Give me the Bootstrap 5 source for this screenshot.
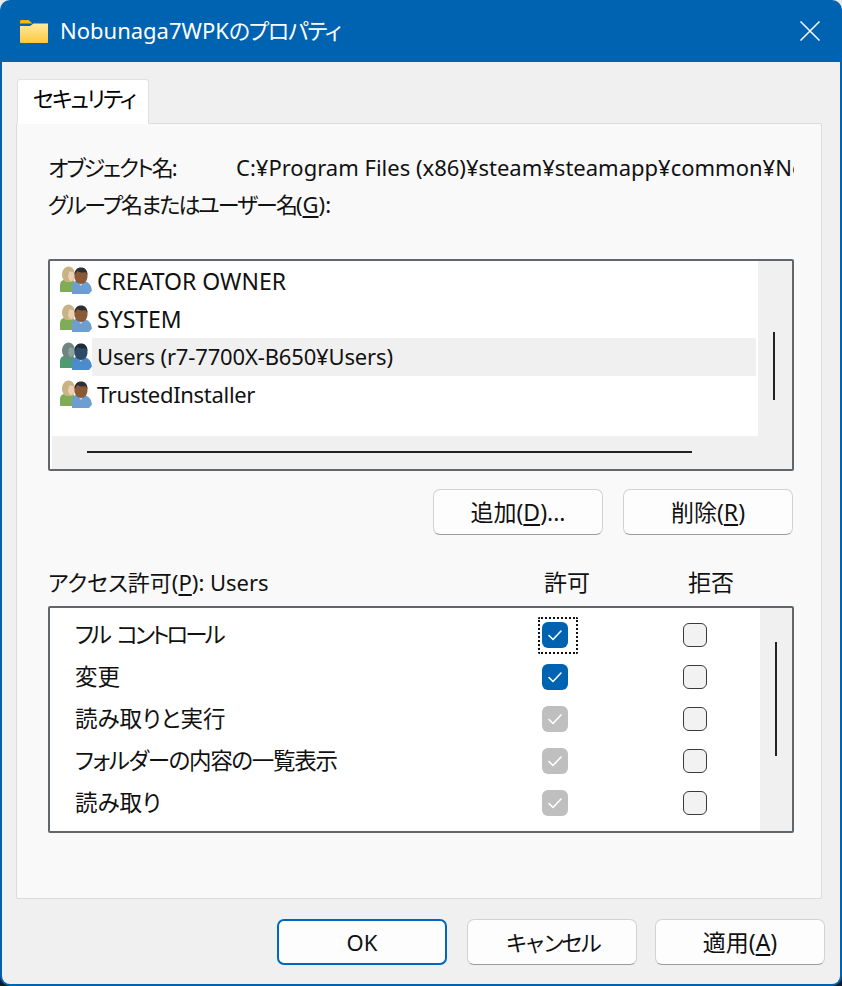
<!DOCTYPE html>
<html lang="ja">
<head>
    <meta charset="UTF-8">
    <meta name="viewport" content="width=device-width, initial-scale=1.0">
    <title>Nobunaga7WPKのプロパティ</title>
    <link href="https://cdn.jsdelivr.net/npm/bootstrap@5.3.0/dist/css/bootstrap.min.css" rel="stylesheet">
    <style>
        html, body { height: 100%; }
        body {
            background: linear-gradient(#e9e9e9 50%, #0b1c33 50%);
            font-family: "Noto Sans", "Noto Sans CJK JP", sans-serif;
            font-size: 22px;
            color: #111;
            overflow: hidden;
            font-feature-settings: "palt";
        }
        .win-frame { height: 986px; background: #0063b1; border-radius: 10px; overflow: hidden; padding: 0 2px 2px; }
        .title-bar { height: 62px; color: #fff; padding-left: 18px; padding-right: 20px; }
        .title-text { margin-left: 12px; line-height: 1; padding-bottom: 2px; }
        .win-client { height: 922px; background: #f0f0f0; padding: 17px 18px 0 14px; border-radius: 0 0 8px 8px; }
        .prop-tabs { border: 0; padding-left: 1px; }
        .prop-tabs .nav-link { height: 45px; width: 132px; padding: 0 0 0 15px; margin-bottom: -1px; font-size: 22px; line-height: 37px; color: #111;
            background: #f9f9f9; border: 1px solid #dcdcdc; border-bottom-color: #f9f9f9; border-radius: 3px 3px 0 0; position: relative; }
        .prop-panel { height: 776px; background: #f9f9f9; border: 1px solid #dcdcdc; border-radius: 0 2px 2px 2px; padding: 26px 27px 0 31px; }
        .label-row { height: 37px; line-height: 35px; white-space: nowrap; }
        .label-name { width: 188px; flex: none; }
        .sunken-box { border: 2px solid #60666a; border-radius: 2px; background: #fff; }
        .list-box { height: 212px; margin-top: 35px; }
        .list-rows { height: 175px; padding-top: 1px; }
        .list-row { height: 38px; line-height: 36px; }
        .acct-icon { width: 32px; height: 28px; margin-left: 10px; margin-bottom: 3px; flex: none; }
        .acct-name { padding-left: 5px; margin-right: 2px; height: 38px; }
        .acct-caps { font-size: 23px; line-height: 38px; }
        .acct-lower { letter-spacing: -.3px; }
        .acct-users { letter-spacing: -.15px; }
        .row-selected { background: #f0f0f0; }
        .scroll-v { width: 34px; background: #f0f0f0; flex: none; }
        .list-thumb-v { width: 2px; height: 68px; background: #222; margin: 71px 0 0 15px; }
        .scroll-h { height: 33px; background: #f0f0f0; padding: 15px 0 0 37px; margin-left: 2px; }
        .thumb-h { width: 605px; height: 2px; background: #222; margin-left: -2px; }
        .win-btn { width: 170px; height: 46px; padding: 0; font-size: 23px; line-height: 38px; color: #111; background: #fdfdfd;
            border: 1px solid #d2d2d2; border-bottom-color: #9c9c9c; border-radius: 7px; }
        .win-btn-default { border: 2px solid #0067c0; line-height: 36px; font-size: 22px; }
        .win-btn-kana { font-size: 22px; letter-spacing: -3.4px; }
        .btn-pair { margin-top: 18px; margin-right: 1px; gap: 20px; }
        .perm-head { display: grid; grid-template-columns: 496px 44px 100px 46px; height: 36px; line-height: 34px; margin-top: 30px; margin-bottom: 5px; white-space: nowrap; }
        .perm-head-kanji { font-size: 23px; }
        .perm-box { height: 227px; }
        .perm-rows { padding-top: 6px; font-size: 22.5px; }
        .perm-row { display: grid; grid-template-columns: 460px 40px 100px 40px; height: 42px; line-height: 40px; align-items: center; padding-left: 25px; }
        .perm-scroll { width: 32px; background: #f0f0f0; flex: none; }
        .perm-thumb { width: 2px; height: 114px; background: #222; margin: 34px 0 0 15px; }
        .chk { width: 26px; height: 26px; border-radius: 6px; margin-left: 7px; position: relative; }
        .chk svg { display: block; }
        .chk-on { background: #0063b1; }
        .chk-dim { background: #bfbfbf; }
        .chk-off { width: 24px; height: 24px; margin-left: 8px; background: #f2f2f2; border: 1.5px solid #3a3a3a; border-radius: 6px; }
        .focus-dots { position: absolute; left: -4px; top: -5px; width: 40px; height: 37px; border: 2px dotted #111; border-radius: 2px; }
        .foot-row { margin-top: 20px; margin-right: -3px; }
        .foot-row .win-btn { margin-left: 20px; }
        .foot-row .win-btn:last-child { margin-left: 18px; }
        .tight-1 { letter-spacing: -1.3px; }
        .tight-2 { letter-spacing: -2px; }
        .tight-3 { letter-spacing: -3px; word-spacing: 5px; }
        u { text-underline-offset: 3px; text-decoration-thickness: 1.5px; }
    </style>
</head>
<body>
    <svg width="0" height="0" class="position-absolute">
        <symbol id="acct" viewBox="0 0 32 28">
            <path d="M0 25v-6c0-3 2-5 5-5.500h5c3 .5 5 2 5 5v7.500H1c-.6 0-1-.4-1-1z" fill="#7fad57"/>
            <path d="M2 9c0-5 3-8.500 6.500-8.500S15 4 15 9c0 3-1 6-3 7H6c-2-1-4-4-4-7z" fill="#c9b283"/>
            <path d="M9 6c2-1 5 0 6 2 0 4-2 7-4 7-1.500 0-2.500-2-3-4z" fill="#ecd0b4"/>
            <path d="M12 28v-8c0-3 2-4.500 5-5.500h6c4 1 7 3 8 6l1 4-3 3.500z" fill="#6d9ed2"/>
            <path d="M17 15l4 5 3-5z" fill="#c9dcef"/>
            <path d="M14.500 10c0-5 2.500-8 6.500-8s6.500 3 6.500 8-3 8-6.500 8-6.500-3-6.500-8z" fill="#8a5a36"/>
            <path d="M14.500 9c0-5 2.500-7.500 6.500-7.500S27.500 4 27.500 9l-2-3c-3 1-6 .5-8-1z" fill="#2e2e33"/>
        </symbol>
        <symbol id="acct-sel" viewBox="0 0 32 28">
            <path d="M0 25v-6c0-3 2-5 5-5.500h5c3 .5 5 2 5 5v7.500H1c-.6 0-1-.4-1-1z" fill="#4f9a72"/>
            <path d="M2 9c0-5 3-8.500 6.500-8.500S15 4 15 9c0 3-1 6-3 7H6c-2-1-4-4-4-7z" fill="#6f8582"/>
            <path d="M9 6c2-1 5 0 6 2 0 4-2 7-4 7-1.500 0-2.500-2-3-4z" fill="#8da09c"/>
            <path d="M12 28v-8c0-3 2-4.500 5-5.500h6c4 1 7 3 8 6l1 4-3 3.500z" fill="#4c8ccc"/>
            <path d="M17 15l4 5 3-5z" fill="#a4c4e4"/>
            <path d="M14.500 10c0-5 2.500-8 6.500-8s6.500 3 6.500 8-3 8-6.500 8-6.500-3-6.500-8z" fill="#2f4a66"/>
            <path d="M14.500 9c0-5 2.500-7.500 6.500-7.500S27.500 4 27.500 9l-2-3c-3 1-6 .5-8-1z" fill="#1d2b3c"/>
        </symbol>
        <symbol id="tick" viewBox="0 0 26 26">
            <path d="M7 13.500l4 4 8-8.500" fill="none" stroke="#fff" stroke-width="1.600" stroke-linecap="round" stroke-linejoin="round"/>
        </symbol>
    </svg>

    <div class="win-frame">
        <div class="title-bar d-flex align-items-center">
            <svg width="28" height="23" viewBox="0 0 28 23">
                <defs><linearGradient id="fold" x1="0" y1="0" x2="0" y2="1"><stop offset="0" stop-color="#ffeaa0"/><stop offset="1" stop-color="#fcc83e"/></linearGradient></defs>
                <path d="M0 1.500C0 .6.6 0 1.500 0h7l4 3.500H0z" fill="#fdb414"/>
                <path d="M0 6h10l3.500-2.500H28V22c0 .6-.5 1-1 1H1c-.5 0-1-.4-1-1z" fill="url(#fold)"/>
            </svg>
            <span class="title-text flex-grow-1">Nobunaga7WPK<span class="tight-1">のプロパティ</span></span>
            <svg width="20" height="20" viewBox="0 0 20 20"><path d="M.5.5l19 19M19.500.5l-19 19" stroke="#fff" stroke-width="1.500"/></svg>
        </div>

        <div class="win-client">
            <ul class="nav nav-tabs prop-tabs">
                <li class="nav-item"><a class="nav-link active tight-2" href="#">セキュリティ</a></li>
            </ul>
            <div class="prop-panel">
                <div class="label-row d-flex">
                    <span class="label-name"><span class="tight-2">オブジェクト名</span>:</span>
                    <span class="overflow-hidden">C:¥Program Files (x86)¥steam¥steamapp¥common¥Nobunaga7WPK</span>
                </div>
                <div class="label-row"><span class="tight-2">グループ名またはユーザー名</span>(<u>G</u>):</div>

                <div class="sunken-box list-box">
                    <div class="d-flex">
                        <div class="list-rows flex-grow-1">
                            <div class="list-row d-flex align-items-center"><svg class="acct-icon"><use href="#acct"/></svg><span class="acct-name acct-caps flex-grow-1">CREATOR OWNER</span></div>
                            <div class="list-row d-flex align-items-center"><svg class="acct-icon"><use href="#acct"/></svg><span class="acct-name acct-caps flex-grow-1">SYSTEM</span></div>
                            <div class="list-row d-flex align-items-center"><svg class="acct-icon"><use href="#acct-sel"/></svg><span class="acct-name acct-users row-selected flex-grow-1">Users (r7-7700X-B650¥Users)</span></div>
                            <div class="list-row d-flex align-items-center"><svg class="acct-icon"><use href="#acct"/></svg><span class="acct-name acct-lower flex-grow-1">TrustedInstaller</span></div>
                        </div>
                        <div class="scroll-v"><div class="list-thumb-v"></div></div>
                    </div>
                    <div class="scroll-h"><div class="thumb-h"></div></div>
                </div>

                <div class="d-flex justify-content-end btn-pair">
                    <button type="button" class="btn win-btn">追加(<u>D</u>)...</button>
                    <button type="button" class="btn win-btn">削除(<u>R</u>)</button>
                </div>

                <div class="perm-head">
                    <span>アクセス許可(<u>P</u>): Users</span>
                    <span class="perm-head-kanji">許可</span>
                    <span></span>
                    <span class="perm-head-kanji">拒否</span>
                </div>
                <div class="sunken-box perm-box d-flex">
                    <div class="perm-rows flex-grow-1" id="permRows"></div>
                    <div class="perm-scroll"><div class="perm-thumb"></div></div>
                </div>
            </div>
            <div class="d-flex justify-content-end foot-row">
                <button type="button" class="btn win-btn win-btn-default">OK</button>
                <button type="button" class="btn win-btn win-btn-kana">キャンセル</button>
                <button type="button" class="btn win-btn">適用(<u>A</u>)</button>
            </div>
        </div>
    </div>

    <script>
        const perms = [
            { name: "フル コントロール", state: "on", focus: true, cls: "tight-3" },
            { name: "変更", state: "on" },
            { name: "読み取りと実行", state: "dim" },
            { name: "フォルダーの内容の一覧表示", state: "dim", cls: "tight-1" },
            { name: "読み取り", state: "dim" }
        ];
        document.getElementById("permRows").innerHTML = perms.map(p => `
            <div class="perm-row">
                <span class="${p.cls || ''}">${p.name}</span>
                <span class="chk chk-${p.state}"><svg width="26" height="26"><use href="#tick"/></svg>${p.focus ? '<span class="focus-dots"></span>' : ''}</span>
                <span></span>
                <span class="chk-off"></span>
            </div>`).join("");
    </script>
    <script src="https://cdn.jsdelivr.net/npm/bootstrap@5.3.0/dist/js/bootstrap.bundle.min.js"></script>
</body>
</html>
